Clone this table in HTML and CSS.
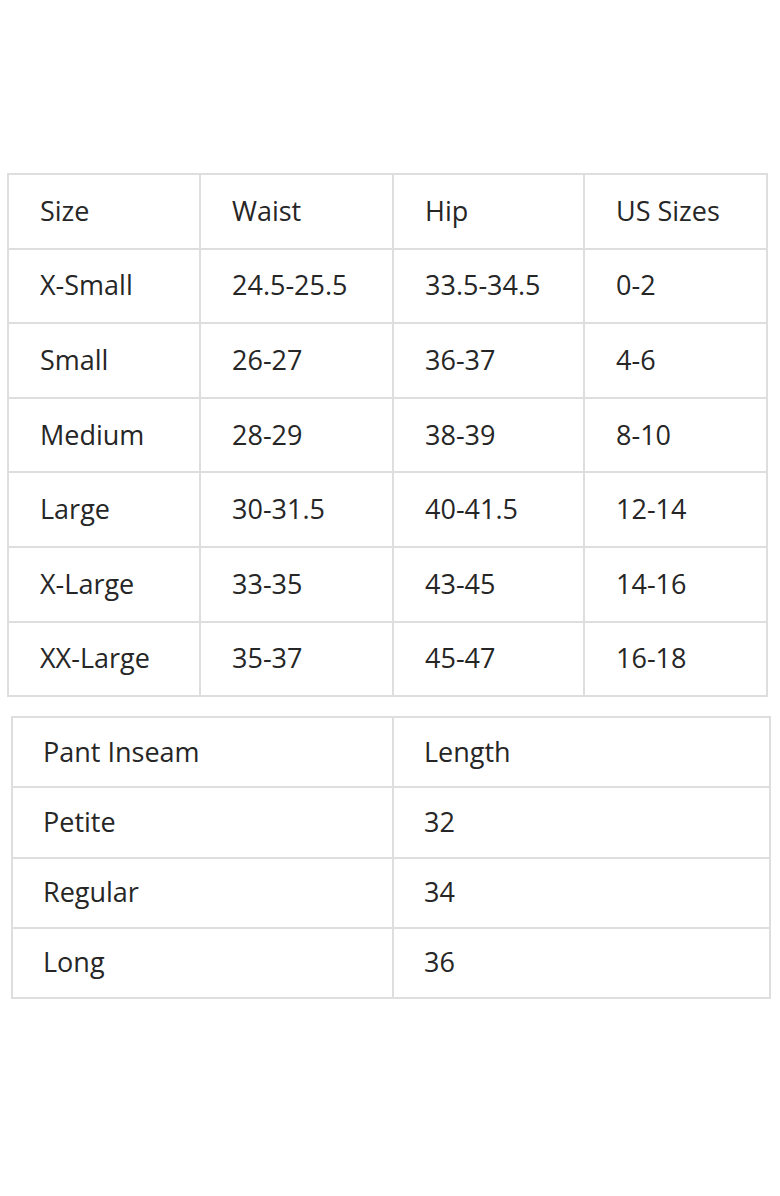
FILE: index.html
```html
<!DOCTYPE html>
<html>
<head>
<meta charset="utf-8">
<link rel="stylesheet" href="styles.css">
</head>
<body>
<div class="page">
  <table class="chart sizes">
    <colgroup><col class="c1"><col class="c2"><col class="c3"><col class="c4"></colgroup>
    <tr><td>Size</td><td>Waist</td><td>Hip</td><td>US Sizes</td></tr>
    <tr><td>X-Small</td><td>24.5-25.5</td><td>33.5-34.5</td><td>0-2</td></tr>
    <tr><td>Small</td><td>26-27</td><td>36-37</td><td>4-6</td></tr>
    <tr><td>Medium</td><td>28-29</td><td>38-39</td><td>8-10</td></tr>
    <tr><td>Large</td><td>30-31.5</td><td>40-41.5</td><td>12-14</td></tr>
    <tr><td>X-Large</td><td>33-35</td><td>43-45</td><td>14-16</td></tr>
    <tr><td>XX-Large</td><td>35-37</td><td>45-47</td><td>16-18</td></tr>
  </table>
  <table class="chart inseam">
    <colgroup><col class="d1"><col class="d2"></colgroup>
    <tr><td>Pant Inseam</td><td>Length</td></tr>
    <tr><td>Petite</td><td>32</td></tr>
    <tr><td>Regular</td><td>34</td></tr>
    <tr><td>Long</td><td>36</td></tr>
  </table>
</div>
</body>
</html>
```

FILE: styles.css
```css
html, body {
  margin: 0;
  padding: 0;
  background: #ffffff;
}
.page {
  padding-top: 173px;
  display: flex;
  flex-direction: column;
}
.chart {
  border-collapse: collapse;
  table-layout: fixed;
  font-family: "Open Sans", "Noto Sans", sans-serif;
  font-size: 27px;
  font-weight: 500;
  color: #262626;
}
.chart td {
  border: 2px solid #dedede;
  padding: 0 0 2px 31px;
  vertical-align: middle;
  white-space: nowrap;
}
.sizes {
  margin-left: 7px;
  width: 759px;
}
.sizes td { height: 70.6px; }
.sizes .c1 { width: 192px; }
.sizes .c2 { width: 193px; }
.sizes .c3 { width: 191px; }
.sizes .c4 { width: 183px; }
.inseam {
  margin-left: 11px;
  margin-top: 19px;
  width: 758px;
}
.inseam td { height: 66.2px; padding-left: 30px; }
.inseam .d1 { width: 381px; }
.inseam .d2 { width: 377px; }
```
